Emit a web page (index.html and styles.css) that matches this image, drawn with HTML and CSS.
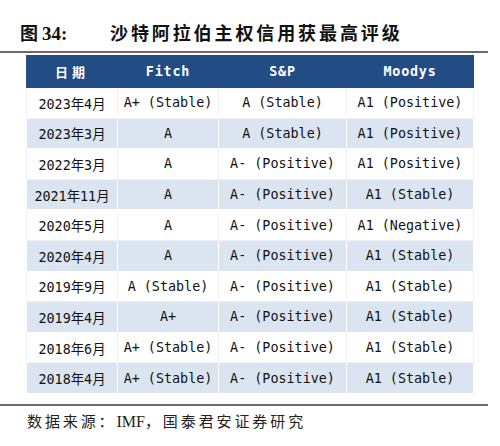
FILE: index.html
```html
<!DOCTYPE html>
<html lang="zh">
<head>
<meta charset="utf-8">
<link rel="stylesheet" href="styles.css">
</head>
<body>
<div class="page">
  <div class="title">
    <span class="fig">图 <span class="num">34:</span></span>
    <span class="caption">沙特阿拉伯主权信用获最高评级</span>
  </div>
  <table class="ratings">
    <colgroup>
      <col class="c1"><col class="c2"><col class="c3"><col class="c4">
    </colgroup>
    <thead>
      <tr><th class="date-h">日期</th><th>Fitch</th><th>S&amp;P</th><th>Moodys</th></tr>
    </thead>
    <tbody>
      <tr><td>2023年4月</td><td>A+ (Stable)</td><td>A (Stable)</td><td>A1 (Positive)</td></tr>
      <tr><td>2023年3月</td><td>A</td><td>A (Stable)</td><td>A1 (Positive)</td></tr>
      <tr><td>2022年3月</td><td>A</td><td>A- (Positive)</td><td>A1 (Positive)</td></tr>
      <tr><td>2021年11月</td><td>A</td><td>A- (Positive)</td><td>A1 (Stable)</td></tr>
      <tr><td>2020年5月</td><td>A</td><td>A- (Positive)</td><td>A1 (Negative)</td></tr>
      <tr><td>2020年4月</td><td>A</td><td>A- (Positive)</td><td>A1 (Stable)</td></tr>
      <tr><td>2019年9月</td><td>A (Stable)</td><td>A- (Positive)</td><td>A1 (Stable)</td></tr>
      <tr><td>2019年4月</td><td>A+</td><td>A- (Positive)</td><td>A1 (Stable)</td></tr>
      <tr><td>2018年6月</td><td>A+ (Stable)</td><td>A- (Positive)</td><td>A1 (Stable)</td></tr>
      <tr><td>2018年4月</td><td>A+ (Stable)</td><td>A- (Positive)</td><td>A1 (Stable)</td></tr>
    </tbody>
  </table>
  <div class="rule"></div>
  <div class="source">数据来源：<span class="latin">IMF</span>，国泰君安证券研究</div>
</div>
</body>
</html>
```
FILE: styles.css
```css
html, body {
  margin: 0;
  padding: 0;
  background: #ffffff;
}
.page {
  width: 500px;
  height: 446px;
  padding-top: 20px;
  box-sizing: border-box;
}
.title {
  width: 488px;
  box-sizing: border-box;
  padding-left: 20px;
  height: 33px;
  border-bottom: 2px solid #6a6a6a;
  display: flex;
  align-items: flex-start;
  font-family: "Noto Sans CJK SC", sans-serif;
  font-weight: 700;
  font-size: 18px;
  line-height: 24px;
  color: #111;
}
.fig {
  width: 90px;
  flex: none;
}
.num {
  font-family: "Liberation Serif", serif;
  font-weight: 700;
  font-size: 19px;
}
.caption {
  letter-spacing: 2.9px;
}
.ratings {
  margin: 2px 0 0 26px;
  width: 447px;
  border-collapse: collapse;
  table-layout: fixed;
  font-family: "DejaVu Sans Mono", "Noto Sans CJK SC", monospace;
  font-size: 13.4px;
  color: #111;
}
.c1 { width: 91px; }
.c2 { width: 101px; }
.c3 { width: 128px; }
.c4 { width: 127px; }
.ratings th {
  background: #214c84;
  color: #ffffff;
  font-weight: 700;
  height: 31px;
  padding: 0;
  letter-spacing: 0.8px;
  border: 1.5px solid #214c84;
  border-left-color: #2a5690;
}
.ratings th.date-h {
  letter-spacing: 4px;
  font-family: "Noto Sans CJK SC", sans-serif;
  font-size: 13px;
}
.ratings td {
  height: 30.6px;
  padding: 0;
  text-align: center;
  white-space: nowrap;
  border: 1.5px solid #eef2f8;
  box-sizing: border-box;
}
.ratings tbody tr:nth-child(even) td {
  background: #dbe5f1;
  border-color: #ffffff;
}
.ratings tbody tr:nth-child(odd) td {
  background: #ffffff;
}
.rule {
  width: 488px;
  height: 2px;
  background: #6a6a6a;
  margin-top: 10px;
}
.source {
  margin: 4px 0 0 27px;
  font-family: "Noto Sans CJK SC", sans-serif;
  font-size: 15px;
  letter-spacing: 2.9px;
  line-height: 22px;
  color: #222;
}
.latin {
  font-family: "Liberation Serif", serif;
  font-size: 16px;
  letter-spacing: 0;
}
```
